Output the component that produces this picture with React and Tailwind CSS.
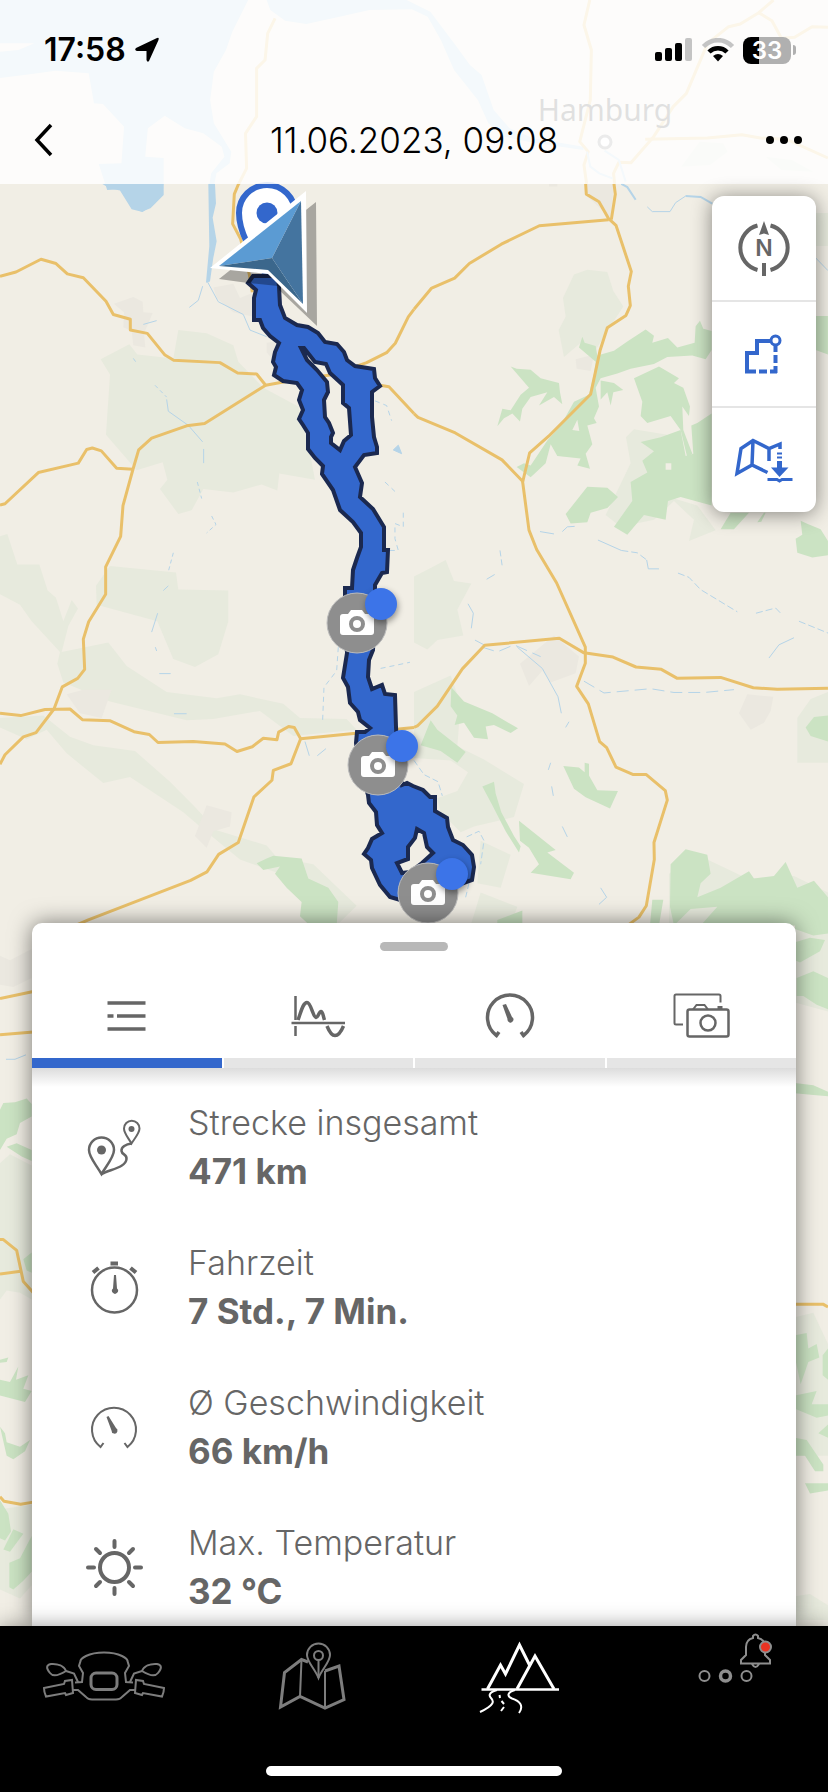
import { useState } from 'react';

const stats = [
  { id: 'distance', label: 'Strecke insgesamt', value: '471 km', Icon: RouteIcon },
  { id: 'time', label: 'Fahrzeit', value: '7 Std., 7 Min.', Icon: StopwatchIcon },
  { id: 'speed', label: 'Ø Geschwindigkeit', value: '66 km/h', Icon: SpeedIcon },
  { id: 'temp', label: 'Max. Temperatur', value: '32 °C', Icon: SunIcon },
];

const tabs = [
  { id: 'list', label: 'Übersicht', Icon: ListTabIcon },
  { id: 'chart', label: 'Verlauf', Icon: ChartTabIcon },
  { id: 'gauge', label: 'Fahrdaten', Icon: GaugeTabIcon },
  { id: 'photos', label: 'Fotos', Icon: PhotosTabIcon },
];

const photoStops = [
  { x: 357, y: 623 },
  { x: 378, y: 765 },
  { x: 428, y: 893 },
];

/* ---------- map ---------- */

// Area around the estuary, behind the header
function NorthTile() {
  return (
    <g transform="scale(0.528 0.3333)">
      <g fill="#b5d4e8">
        <path d="M0 0H470L440 95L428 150L405 215L398 300L405 370L438 455L435 490L410 520L405 560H396L400 520L425 470L420 440L385 400L350 385L312 347L280 385L275 470L310 474V585L285 625L268 635L250 620L228 568L203 570L187 492L230 490L235 380L195 312L178 310L168 220L105 212L60 222L0 234V155L35 150L65 130H0Z" />
        <path d="M505 0H770L815 35L860 130L890 195L912 225L935 330L965 385L1010 415L1105 440V450L1010 428L955 410L925 370L905 300L860 210L835 120L810 50L780 28L700 30L630 55L580 72L540 62L512 30Z" />
      </g>
      <path d="M1325 425L1370 430L1378 455L1345 495L1290 500Z M1450 470L1500 480L1540 515L1480 510Z" fill="#dfe6d5" />
      <g className="fill-none stroke-[#e9c06a] stroke-3" strokeLinejoin="round">
        <path vectorEffect="non-scaling-stroke" d="M521 55L507 100L502 180L486 205V350L465 400L467 505L452 552" />
        <path vectorEffect="non-scaling-stroke" d="M1117 0L1106 75L1120 150L1118 300L1098 425L1114 455L1106 495L1111 552" />
        <path vectorEffect="non-scaling-stroke" d="M1465 0L1437 38L1402 72L1380 80L1340 130L1300 280L1275 320L1238 410L1195 488L1172 487L1162 520L1164 552" />
        <path vectorEffect="non-scaling-stroke" d="M1437 38L1462 62L1480 115L1505 112L1538 80L1568 82M1222 418L1340 414L1405 404L1440 414L1490 418L1568 474" />
      </g>
      <g className="fill-none stroke-[#b5d4e8] stroke-2">
        <path vectorEffect="non-scaling-stroke" d="M1112 455L1118 500L1135 520L1160 535M1145 452L1172 480L1185 545" />
      </g>
    </g>
  );
}

function WestTile() {
  return (
    <g transform="translate(0 180) scale(0.3333 0.4719)">
      <g fill="#e7eadd">
        <path d="M302 380L388 348L412 370L520 378L535 318L620 325L700 350L715 385L790 440L895 480L925 560L945 635L838 622L832 658L785 645L700 662L610 655L575 700L535 708L480 655L502 635L488 598L410 615L318 540L330 412Z" />
        <path d="M0 755L22 750L52 815L118 815L143 870L168 885L190 935L215 890L234 908L205 945L185 1000L325 980L380 1030L500 1085L650 1098L720 1090L850 1110L900 1140L1040 1142L1070 1165L880 1178L780 1125L640 1142L560 1145L330 1105L190 1065L172 1025L180 1000L95 935L60 900L0 878Z" />
        <path d="M288 860L330 818L528 832L535 868L685 870V935L655 1005L585 1032L520 1015L472 935L290 900Z" />
        <path d="M0 1140L130 1135L210 1180L280 1198L405 1210L510 1275L580 1325L650 1378L800 1410L830 1435L940 1450L1070 1538L1010 1580H960L880 1480L720 1440L600 1370L550 1340L390 1265L310 1278L200 1215L140 1165L80 1185L0 1160Z" />
      </g>
      <g fill="#ebe8e0">
        <path d="M342 262L400 248L428 258L430 280L458 282L432 325L436 355L400 350L395 320L370 312L372 280Z" />
        <path d="M640 228L700 220L720 250L755 240L760 290L700 280L650 250Z M800 345L850 340L840 400L800 365Z" />
        <path d="M200 1090L250 1080L335 1080L320 1110L305 1140L240 1130Z" />
        <path d="M585 1390L620 1325L695 1340L690 1370L640 1380L620 1415Z" />
      </g>
      <g fill="#cbe3c3">
        <path d="M770 1448L800 1438L820 1432L905 1438L925 1480L985 1500L1015 1530L1010 1580H930L900 1560L905 1530L860 1500L825 1470L840 1455L790 1462Z" />
      </g>
      <path d="M306 8H490L488 25L465 50L428 68L395 62L360 22L330 18Z M625 8H645L648 50L638 80L650 130L640 165L630 215L618 218L628 140Z" fill="#b5d4e8" />
      <g className="fill-none stroke-[#b5d4e8] stroke-1">
        <path vectorEffect="non-scaling-stroke" d="M622 215L655 258L730 285L750 318L800 332" />
        <path vectorEffect="non-scaling-stroke" d="M608 225L595 255L568 270M430 306L470 298M500 465L505 490L565 520L608 555M611 570V600" />
        <path vectorEffect="non-scaling-stroke" strokeDasharray="4 3" d="M465 435L500 460M592 640L605 675M635 712L648 730L620 748M520 790L505 830M400 378L410 388" />
        <path vectorEffect="non-scaling-stroke" d="M490 870L505 860M473 918L455 958M478 1046H512M522 1131H560M915 1190L928 1220M952 1220L978 1205M466 990L470 998" />
        <path vectorEffect="non-scaling-stroke" strokeDasharray="5 4" d="M1015 990L1010 1040L972 1075L968 1145M1142 1035L1230 1022M1125 468L1160 478L1175 510M1155 640L1185 660M1210 705V735L1185 728V760L1195 785H1170" />
        <path vectorEffect="non-scaling-stroke" className="fill-[#b5d4e8]" d="M1180 572L1195 562L1205 580Z" />
      </g>
      <g className="fill-none stroke-[#e9c06a] stroke-3" strokeLinejoin="round">
        <path vectorEffect="non-scaling-stroke" d="M0 204L48 195L123 168L168 177L202 199L250 207L318 257L340 285L391 295V318L442 325L495 371L521 382L660 387L713 409L770 411L797 435L850 428L1000 412L1100 387L1160 366L1186 346L1225 290L1242 274" />
        <path vectorEffect="non-scaling-stroke" d="M797 435L614 516L560 521L455 547L416 572L399 613L369 690L362 755L317 820V878L266 936L250 973L254 1037L233 1056L187 1074L162 1121L108 1171L70 1180L15 1218L0 1238" />
        <path vectorEffect="non-scaling-stroke" d="M0 689L15 686L115 620L235 600L260 571L277 568L304 574L350 611L399 613" />
        <path vectorEffect="non-scaling-stroke" d="M0 1130L62 1135L135 1122L210 1121L248 1144L331 1146L402 1169L448 1175L474 1192L580 1190L675 1195L711 1211L757 1201L790 1183L831 1186L836 1170L866 1158L883 1160L902 1184L1242 1160" />
        <path vectorEffect="non-scaling-stroke" d="M902 1184L873 1237L820 1251L816 1272L762 1307L715 1404L656 1429L621 1466L572 1484L265 1568L225 1580" />
        <path vectorEffect="non-scaling-stroke" d="M716 8L703 30L698 93L722 125L748 200L757 238" />
        <path vectorEffect="non-scaling-stroke" d="M1140 435L1167 438L1242 495" />
      </g>
    </g>
  );
}

function EastTile() {
  return (
    <g transform="translate(414 180) scale(0.3333 0.4719)">
      <g fill="#e7eadd">
        <path d="M447 250L480 200L520 190L580 195L598 235L628 268L580 320L545 360L500 345L450 375L434 318L455 290Z" />
        <path d="M0 840L50 822L95 805L120 850L172 855L130 910L148 965L70 975L40 995L0 980Z" />
        <path d="M0 1085L110 1050L140 1110L130 1200L210 1228L330 1280L300 1350L180 1370L140 1382L80 1340L70 1310L130 1295L162 1255L110 1230L0 1225Z M200 1400L290 1430L260 1500L190 1490Z M170 1580L200 1510L310 1540L290 1580Z" />
        <path d="M1242 1085L1190 1100L1150 1140V1235H1242Z M765 1470L850 1430L1000 1480L1140 1475L1242 1510V1580H765Z M1205 70H1242V140H1205Z" />
        <path d="M575 710L650 600L636 545L660 528L760 540L740 650L780 675L850 690L905 742L825 765L840 720L780 680L720 720L620 735Z" />
      </g>
      <g fill="#ebe8e0">
        <path d="M515 8H600L590 80L520 35Z M318 1025L420 965L495 1010L485 1045L410 1065L385 1040L345 1072Z M975 1130L1000 1090L1078 1095L1070 1125L1050 1150L1010 1165Z" />
        <path d="M405 8H430V14H405Z M485 380L540 370L530 405L488 400Z" />
      </g>
      <g fill="#cbe3c3">
        <path d="M495 355L505 332L512 345L545 352L550 372L600 362L640 342L695 317L720 330L715 345L762 335L790 355L842 345L845 310L858 298L868 315L893 320V360L875 380L835 372L760 375L720 390L650 400L610 410L560 420L545 440L555 480L540 505L548 515L520 520L535 560L515 580L528 612L490 605L500 590L430 585L410 560L395 600L350 630L308 608L330 600L350 605L400 552L440 520L480 470L525 455L540 410L545 385Z" />
        <path d="M290 395L308 400L350 402L380 420L435 430L438 450L445 475L420 460L375 478L400 450L350 460L325 485L318 512L295 495L270 505L250 522L265 485L290 488L320 455L345 440Z" />
        <path d="M560 425L600 430L628 445L598 450L590 478L580 450L560 465Z" />
        <path d="M660 420L735 395L795 420L780 430L808 440L828 480L825 500L805 480L808 530L835 580L820 588L800 530L770 500L700 515L680 500L685 470L670 440Z" />
        <path d="M893 495L850 515L832 520L838 580L815 585L800 530L740 545L680 555L720 575L685 595L700 620L650 640L655 680L600 735L640 752L690 710L755 720L762 680L800 672L893 690Z" />
        <path d="M455 708L520 650L580 652L612 672L580 695L530 705L520 725L470 728Z" />
        <path d="M920 740L950 705H1005L960 740Z M1030 725L1050 705H1055L1042 724Z" />
        <path d="M1145 760L1165 752L1160 722L1185 730L1220 740L1242 765V795L1195 800L1150 790Z M1205 288H1242V370L1205 360Z" />
        <path d="M112 1075L150 1105L235 1130L312 1162L290 1172L240 1155L215 1158L222 1185L180 1182L150 1150L122 1155L130 1135L110 1115Z" />
        <path d="M20 1198L50 1145L70 1165L155 1212L130 1235L80 1210Z" />
        <path d="M448 1242L495 1245L512 1255V1235L525 1237V1262L550 1293L612 1295L588 1332L515 1308L480 1290Z" />
        <path d="M205 1285L240 1275L245 1300L262 1340L300 1390L320 1412L315 1425L275 1380L235 1325Z" />
        <path d="M315 1358L425 1420L400 1425L480 1468L470 1482L350 1468L375 1450L345 1415L318 1400Z" />
        <path d="M768 1540L770 1450L815 1418L880 1430L890 1470L860 1490L850 1520L920 1500L1005 1465L1020 1480L1080 1475L1115 1445L1150 1500L1200 1485L1242 1520V1580H860L910 1540L830 1545L780 1580Z M715 1525H748L735 1580H708Z M250 1568L325 1548V1580H250Z" />
        <path d="M1175 1160L1200 1138L1242 1135V1190L1190 1178Z" />
      </g>
      <path d="M755 600H772V614H755Z M475 530L490 508L496 532Z" fill="#f1eee5" />
      <g className="fill-none stroke-[#b5d4e8] stroke-1">
        <path vectorEffect="non-scaling-stroke" className="stroke-2" d="M622 8L640 15L665 42M815 34L860 36L895 50" />
        <path vectorEffect="non-scaling-stroke" d="M700 57L715 67H768L785 48L815 34M1205 165L1242 192" />
        <path vectorEffect="non-scaling-stroke" d="M378 745L420 750M445 745L460 735L482 734M552 763L622 785M698 805L703 824H735M218 846L242 836M162 898L178 918L172 950M183 975L210 985" />
        <path vectorEffect="non-scaling-stroke" strokeDasharray="7 3" d="M622 785L670 790L698 805M792 833L825 842L860 868L970 915M1026 918L1085 907L1100 918M1155 935L1242 960" />
        <path vectorEffect="non-scaling-stroke" strokeDasharray="12 6" d="M205 990L250 1000L300 985L380 1010M510 1062L570 1087L710 1078L780 1086H870L960 1080" />
        <path vectorEffect="non-scaling-stroke" d="M1065 1013L1095 985L1140 970M310 990L385 1035L432 1095L442 1130M455 1160L465 1148M410 1235L403 1250M413 1285L418 1305M445 1370L460 1392M560 1500L578 1520L555 1535" />
        <path vectorEffect="non-scaling-stroke" strokeDasharray="6 3" d="M0 1230L30 1260L72 1275L85 1305M158 1392L195 1380L210 1400L200 1450M165 1490L155 1520M258 785L265 820" />
      </g>
      <g className="fill-none stroke-[#e9c06a] stroke-3" strokeLinejoin="round">
        <path vectorEffect="non-scaling-stroke" d="M0 274L53 229L122 208L166 177L262 136L376 97L584 84" />
        <path vectorEffect="non-scaling-stroke" d="M515 8L517 30L555 46L584 82L606 96L652 194L643 225L649 266L636 287L580 313L558 362L530 454L404 543L347 578L326 640L345 742L368 783L428 854L514 990V1024L488 1073L523 1110L557 1190L578 1203L606 1244L658 1260H697L754 1294L760 1314L720 1404L721 1440L697 1538L675 1562L640 1580" />
        <path vectorEffect="non-scaling-stroke" d="M600 8L604 30L592 84" />
        <path vectorEffect="non-scaling-stroke" d="M0 495L12 503L124 536L264 593L328 640" />
        <path vectorEffect="non-scaling-stroke" d="M0 1160L10 1157L70 1115L145 1036L212 986L436 971L510 1002L597 1011L666 1032L742 1037L790 1056L920 1054L1018 1076L1090 1079L1242 1077" />
      </g>
    </g>
  );
}

// Narrow strips left and right of the sheet
function SouthTiles() {
  return (
    <>
      <g transform="translate(0 920) scale(0.3333 0.4464)">
        <path d="M0 545L30 525L95 550V850L60 835L20 830L0 850Z M0 1320L95 1310V1490L60 1520L0 1500Z" fill="#e7eadd" />
        <path d="M0 80L30 90L95 65V130L40 150L0 145Z" fill="#ebe8e0" />
        <path d="M0 425L10 410L45 408L80 400L95 412V440L60 455L50 480L20 490L0 515Z M20 508L50 500L95 515V540L65 530Z M70 760L95 745V790L80 785Z M0 985L25 980L20 990L0 992Z M0 1030L30 1035L55 1000L48 1030L85 1020L70 1050L95 1055L75 1080L0 1065Z M0 1135L15 1150L20 1170L60 1180L90 1165L75 1190L40 1208L20 1200Z M0 1300L25 1330L33 1370L15 1390L0 1385Z M10 1410L40 1365L70 1375L30 1415Z M28 1440L60 1430L95 1380V1460L70 1480L40 1500L28 1495Z" fill="#cbe3c3" />
        <g className="fill-none stroke-[#e9c06a] stroke-3" strokeLinejoin="round">
          <path vectorEffect="non-scaling-stroke" d="M0 176L100 160M0 257L100 251" />
          <path vectorEffect="non-scaling-stroke" d="M0 716H10L50 740L70 810L100 835M0 793L62 787M0 1292L12 1302L62 1309L100 1304" />
        </g>
        <path vectorEffect="non-scaling-stroke" className="fill-none stroke-[#b5d4e8] stroke-1" d="M18 312H45L78 302" />
      </g>
      <g transform="translate(780 920) scale(0.3333 0.4464)">
        <path d="M45 0H144V205L45 185Z M45 890L100 880L144 950V1200L45 1200Z M45 1515L90 1510L144 1535V1568H45Z" fill="#e7eadd" />
        <path d="M45 0H144V30L100 35L45 20Z M45 50L90 40L135 45L120 70L60 95L45 90Z M50 130L100 115L144 130V200L110 190L70 170H50Z M45 365L100 370L144 385V395L100 392L45 388Z M45 930L80 925L85 960L110 950L118 980L85 990L62 1040L45 980Z M45 1065L110 1055L95 1085L144 1085V1110L110 1115L45 1095Z M115 1150L144 1130V1160Z M45 1160L80 1165L130 1220V1235H105L75 1200H45Z M75 1262H144V1278L90 1285Z M128 975L144 960V1030L128 1020Z" fill="#cbe3c3" />
        <path vectorEffect="non-scaling-stroke" className="fill-none stroke-[#e9c06a] stroke-3" d="M45 861H130L144 867" />
      </g>
    </>
  );
}

function Track() {
  return (
    <path
      fillRule="evenodd"
      className="fill-[#3367cc] stroke-[#1b2950] stroke-4"
      d="M253 276L248 283L256 290L254 298V320H260L263 328L270 336L279 343L275 352L273 362L276 367L274 375L283 381L297 383L302 390L299 400L303 410L299 419L303 425L308 433V449L315 458L323 466L322 474L333 490L340 510L353 522L361 533V547L357 558L353 570L352 588H345V610L347 653L343 678L348 687L350 703L358 712L360 720L370 728L365 732H357L356 743L360 770L368 795L369 803L376 812L377 825L382 833L372 839L368 848L364 854L371 860L372 868L380 885L390 897L400 900L430 895L472 880L474 867L472 855L463 845L453 840L448 827L447 818L435 811V797H430L423 790L413 786L407 783L402 785L398 760L396 727L395 695L385 694L382 685L372 689L368 677L369 660L373 650L375 600V585L382 573L387 572L388 550H384V527L373 509L360 497L362 483L355 467L364 455L377 453V447L374 437L372 417V392L380 386L375 378L374 369L355 366L347 360L344 352L337 344L325 342L318 333L308 327L297 325L285 318L280 305L279 287L278 276Z
        M301 348L304 348L315 362L326 364L330 373L343 385V403L349 408L351 435L344 441L340 450L331 443V437L333 433L329 423L325 417L324 400L328 392L327 382L317 370L307 360Z
        M417 829L424 833L427 847L433 853L422 863L410 872L402 873L397 863L408 859V847L415 838Z"
    />
  );
}

function PhotoStop({ x, y }) {
  return (
    <g transform={`translate(${x} ${y})`}>
      <circle r="30" fill="#8e8e8e" stroke="#bcbcbc" strokeWidth="1" />
      <path d="M-14 -9H-9L-6 -13H5L8 -9H14Q17 -9 17 -6V9Q17 12 14 12H-14Q-17 12 -17 9V-6Q-17 -9 -14 -9Z" fill="#fff" />
      <circle cy="1" r="6" fill="#fff" stroke="#8e8e8e" strokeWidth="4" />
      <circle cx="24" cy="-19" r="16" fill="#3c74e8" className="drop-shadow-[1px_3px_3px_rgba(0,0,0,0.4)]" />
    </g>
  );
}

function RouteMap() {
  return (
    <svg
      viewBox="0 0 828 1792"
      preserveAspectRatio="xMidYMin slice"
      className="absolute inset-0 w-full h-full"
      role="img"
      aria-label="Karte"
    >
      <NorthTile />
      <WestTile />
      <EastTile />
      <SouthTiles />
      <text x="605" y="121" textAnchor="middle" className="fill-[#333] text-[30px] font-['Noto_Sans',sans-serif]">
        Hamburg
      </text>
      <circle cx="605" cy="142" r="6" fill="#fff" stroke="#777" strokeWidth="3" />
      {/* start pin */}
      <path d="M267 276C250 250 239 232 239 213A28 28 0 0 1 295 213C295 232 284 250 267 276Z" fill="#fff" stroke="#3367cc" strokeWidth="6" />
      <circle cx="267" cy="213" r="10.5" fill="#3367cc" />
      <Track />
      {/* position arrow */}
      <path d="M219 279L316 202L317 326L279 290L278 286L248 283Z" fill="#000" fillOpacity="0.3" />
      <path d="M210 268L306 191L307 313L268 274Z" fill="#fff" />
      <path d="M219 266L301 201L272 258Z" fill="#5b9bd3" />
      <path d="M301 201L303 304L272 258Z" fill="#44749f" />
      <path d="M219 266L272 258L303 304L268 270Z" fill="#3b678c" />
      {photoStops.map((stop) => (
        <PhotoStop key={stop.y} x={stop.x} y={stop.y} />
      ))}
    </svg>
  );
}

/* ---------- status bar ---------- */

function StatusBar() {
  return (
    <div className="flex h-[98px] items-center justify-between pt-0.5 pl-11 pr-8">
      <div className="flex items-center gap-2">
        <span className="text-[32px] font-semibold">17:58</span>
        <svg width="26" height="26" viewBox="0 0 26 26">
          <path d="M23 1Q25.5 0 24.5 3L15 24Q13.5 26 12.5 23V14H3Q0 13 2 11Z" />
        </svg>
      </div>
      <div className="flex items-center gap-2">
        <svg width="38" height="24" viewBox="0 0 38 24">
          <rect x="0" y="14" width="7" height="9" rx="2" />
          <rect x="10" y="10" width="7" height="13" rx="2" />
          <rect x="20" y="5" width="7" height="18" rx="2" />
          <rect x="30" y="0" width="7" height="23" rx="2" fill="#c4c4c4" />
        </svg>
        <svg width="34" height="24" viewBox="0 0 34 24" fill="none">
          <path d="M2.5 8.5C10.5 0 23.5 0 31.5 8.5" stroke="#c4c4c4" strokeWidth="4.5" />
          <path d="M8 14C13 9 21 9 26 14" stroke="#000" strokeWidth="4.5" />
          <path d="M12 18Q17 14 22 18L17 23.5Z" fill="#000" />
        </svg>
        <div className="flex items-center gap-0.5">
          <div className="h-[27px] w-12 rounded-lg bg-[linear-gradient(90deg,#000_34%,#b0b0b0_34%)] text-center text-2xl leading-[27px] font-semibold text-white">
            33
          </div>
          <div className="h-2.5 w-[3px] rounded-r-full bg-[#b0b0b0]" />
        </div>
      </div>
    </div>
  );
}

/* ---------- icons ---------- */

function CompassIcon() {
  return (
    <svg viewBox="0 0 104 104" className="size-[104px]" fill="none" stroke="#666" strokeWidth="4">
      <path d="M45.5 29.5A23 23 0 0 0 45.5 74M58.5 29.5A23 23 0 0 1 58.5 74" />
      <path d="M52 67V80" />
      <path d="M52 25L57 39L52 37.5L47 39Z" fill="#666" stroke="none" />
      <text x="52" y="60" textAnchor="middle" fill="#666" stroke="none" className="text-[23px] font-semibold">N</text>
    </svg>
  );
}

function TourIcon() {
  return (
    <svg viewBox="0 0 104 104" className="size-[104px]" fill="none" stroke="#3367cc" strokeWidth="4">
      <path d="M59 39H45V51H35V69.5H44M47 69.5H55M58 69.5H65M63.5 71V64M63.5 61V53M63.5 50V43" />
      <circle cx="63.5" cy="38.5" r="4.5" strokeWidth="3" fill="#fff" />
    </svg>
  );
}

function MapDownloadIcon() {
  return (
    <svg viewBox="0 0 104 104" className="size-[104px]" fill="none" stroke="#3367cc" strokeWidth="3.5">
      <path d="M55.5 64.5L40 57L25 65.5L29 40.5L41 32.5L57 40.5L68 36V41M41 32.5L40 57M57 40.5V53" />
      <path d="M65 45.5H70M65 49.5H70" strokeWidth="2" />
      <path d="M67.5 53V61" strokeWidth="5" />
      <path d="M59 59.5H76.5L67.5 69Z" fill="#3367cc" stroke="none" />
      <path d="M55.5 71.5H65L67.5 73L70 71.5H80.5" strokeWidth="3" />
    </svg>
  );
}

function ListTabIcon() {
  return (
    <svg viewBox="0 0 80 60" className="h-[60px] w-20" stroke="#666" strokeWidth="3.5">
      <path d="M20.5 17H58.5M20.5 30H26.5M30 30H58.5M20.5 43H58.5" />
    </svg>
  );
}

function ChartTabIcon() {
  return (
    <svg viewBox="0 0 80 60" className="h-[60px] w-20" fill="none" stroke="#666" strokeWidth="3.5">
      <path d="M17.5 10V34M17.5 40V50M13.5 37H67" strokeWidth="2.5" />
      <path d="M20 34C23 26 25 16.5 29 16.5S35 31 38 31.5C40 32 41 25.5 43 25.5S45 30 46.5 34M49 40C51 45 54 49.5 57 49.5S63 46 65.5 40" />
    </svg>
  );
}

function GaugeTabIcon() {
  return (
    <svg viewBox="0 0 80 60" className="h-[60px] w-20" fill="none" stroke="#666" strokeWidth="3.5">
      <path d="M29 46L26.5 49.5A22.5 22.5 0 1 1 53.5 49.5L51 46" />
      <path d="M32.5 19L36 18L42 31A3 3 0 1 1 37.5 33Z" fill="#666" stroke="none" />
    </svg>
  );
}

function PhotosTabIcon() {
  return (
    <svg viewBox="0 0 80 60" className="h-[60px] w-20" fill="none" stroke="#666" strokeWidth="2">
      <path d="M22 38.5H15Q13.5 38.5 13.5 37V10Q13.5 8.5 15 8.5H58Q59.5 8.5 59.5 10V16.5" />
      <rect x="26.5" y="23.5" width="41" height="27" rx="2" strokeWidth="2.5" />
      <path d="M32 23.5L35.5 19H43.5L47 23.5" />
      <path d="M56.5 21.5H61.5" strokeWidth="3" />
      <circle cx="47" cy="37" r="7.5" strokeWidth="2.5" />
    </svg>
  );
}

function RouteIcon() {
  return (
    <svg viewBox="0 0 64 64" className="size-16" fill="none" stroke="#666" strokeWidth="2.5">
      <path d="M19.5 59C13 48 7 42 7 35A12.5 12.5 0 0 1 32 35C32 42 25 50 19.5 59Z" />
      <circle cx="19.5" cy="35" r="4.5" fill="#666" stroke="none" />
      <path d="M49.5 28.5C45 21 42 18 42 13.5A7.7 7.7 0 0 1 57.5 13.5C57.5 18 53 23 49.5 28.5Z" strokeWidth="2" />
      <circle cx="49.5" cy="14" r="3" fill="#666" stroke="none" />
      <path d="M49.5 28.5C44 29 39 32 39.5 36S45 39 44.5 44C44 52 30 54 19.5 59" />
    </svg>
  );
}

function StopwatchIcon() {
  return (
    <svg viewBox="0 0 64 64" className="size-16" fill="none" stroke="#666" strokeWidth="2.5">
      <circle cx="32.5" cy="35" r="22.5" />
      <path d="M28.5 8.5H36M11 17.5L16.5 13M54 17.5L48.5 13" strokeWidth="4" />
      <path d="M32 20H34L35 33.5A3 3 0 1 1 31 33.5Z" fill="#666" stroke="none" />
    </svg>
  );
}

function SpeedIcon() {
  return (
    <svg viewBox="0 0 64 64" className="size-16" fill="none" stroke="#666" strokeWidth="2">
      <path d="M21.5 48L18.5 52A22 22 0 1 1 45.5 52L42.5 48" />
      <path d="M24.5 22L26.5 21L34 33A3 3 0 1 1 29.5 35.5Z" fill="#666" stroke="none" />
    </svg>
  );
}

function SunIcon() {
  return (
    <svg viewBox="0 0 64 64" className="size-16" fill="none" stroke="#666" strokeWidth="4" strokeLinecap="round">
      <circle cx="32.5" cy="32.5" r="14.5" />
      <path d="M32.5 6V12M32.5 53V59M6 32.5H12M53 32.5H59M14 14L18 18M47 47L51 51M51 14L47 18M18 47L14 51" />
    </svg>
  );
}

function BikeIcon() {
  const half = (
    <>
      <path d="M70 22.5C62 22.5 56 24 52 26C48 28 46.5 29 46.5 31L45 36L49 43L48 52L41 52.5M44 52L40 43.5L32 41M39 60H44L52 67Q54 69.5 58 69.5H70" />
      <path d="M32 41C30 36 24 33.500 17 34C12 35 12 38 16 43C19 47 24 46 32 41Z" />
      <path d="M10 58L30 54L31 51L38 50L39 63L32 65L31 63L12 66.5Q10 62 10 58Z" />
    </>
  );
  return (
    <svg viewBox="0 0 140 90" className="h-[90px] w-[140px]" fill="none" stroke="#7d7d7d" strokeWidth="2">
      {half}
      <g transform="translate(140 0) scale(-1 1)">{half}</g>
      <rect x="57" y="43" width="26" height="16.5" rx="5" strokeWidth="3" />
    </svg>
  );
}

function MapNavIcon() {
  return (
    <svg viewBox="0 0 140 90" className="h-[90px] w-[140px]" fill="none" stroke="#7d7d7d" strokeWidth="3">
      <path d="M67 32L60.5 29.5L43.5 42.5L39.5 77L59 66.5L84 78L103 69.5L98 36L84 41" />
      <path d="M60.5 29.5L59 66.5M84 41V78" strokeWidth="2" />
      <path d="M77.5 48C74 39 66 32 66 25A11.5 11.5 0 0 1 89 25C89 32 81 39 77.5 48Z" strokeWidth="2" />
      <circle cx="77.5" cy="25.5" r="4.5" strokeWidth="2" />
      <path d="M77.5 30V48" strokeWidth="2" />
    </svg>
  );
}

function TripsNavIcon() {
  return (
    <svg viewBox="0 0 140 90" className="h-[90px] w-[140px]" fill="none" stroke="#fff" strokeWidth="2.5">
      <path d="M33.5 59.5H111" />
      <path d="M39.5 59L52.5 35L57.5 44L71.5 15L81.5 35M69 59L87 26L106 59" strokeWidth="3" />
      <path d="M49 60C42 62 40 65 43 68S47 75 32 82M67 60C60 62 58 66 64 68.5C72 71 76 76 71 83M51.5 65L52 68M53.5 71L56 74M56 77L53 81" strokeWidth="2" />
    </svg>
  );
}

function MoreNavIcon() {
  return (
    <svg viewBox="0 0 140 90" className="h-[90px] w-[140px]" fill="none" stroke="#8e8e8e" strokeWidth="2">
      <circle cx="49.5" cy="46" r="5" />
      <circle cx="70.5" cy="46" r="5" strokeWidth="3.5" />
      <circle cx="91.5" cy="46" r="5" />
      <path d="M86 33.5V30L91 25V17C91 12 94 9 98 8V6Q100.5 3 103 6V8C107 9 110 12 110 17V25L115 30V33.5ZM97 34Q100.5 40 104 34" />
      <circle cx="110.5" cy="17" r="5.5" fill="#ea3323" />
    </svg>
  );
}

/* ---------- sheet ---------- */

function TourSheet() {
  const [activeTab, setActiveTab] = useState('list');

  return (
    <section className="mx-8 mt-auto rounded-t-[10px] bg-white shadow-[0_0_22px_rgba(0,0,0,0.5)]">
      <div className="flex h-[53px] justify-center pt-[19px]">
        <div className="h-[9px] w-[68px] rounded-full bg-[#b8b8b8]" />
      </div>
      <div role="tablist" className="grid grid-cols-4 gap-0.5">
        {tabs.map(({ id, label, Icon }) => (
          <button
            key={id}
            role="tab"
            aria-label={label}
            aria-selected={activeTab === id}
            onClick={() => setActiveTab(id)}
            className={`flex h-[92px] justify-center border-b-10 pt-2.5 ${
              activeTab === id ? 'border-[#3367cc]' : 'border-[#e5e5e5]'
            }`}
          >
            <Icon />
          </button>
        ))}
      </div>
      <dl className="-mb-3 bg-[linear-gradient(#dcdcdc,#fff_19px)] pt-2.5">
        {stats.map(({ id, label, value, Icon }) => (
          <div key={id} className="grid h-[140px] grid-cols-[64px_1fr] content-center items-center gap-x-[42px] pb-0.5 pl-[50px] leading-[49px] text-[#666]">
            <div className="row-span-2">
              <Icon />
            </div>
            <dt className="text-[34px] font-light">{label}</dt>
            <dd className="text-[35px] font-bold">{value}</dd>
          </div>
        ))}
      </dl>
    </section>
  );
}

export default function App() {
  return (
    <div className="relative flex min-h-screen flex-col overflow-hidden bg-[#f1eee5] font-[Inter,sans-serif] text-black">
      <RouteMap />

      <header className="relative bg-white/85">
        <StatusBar />
        <div className="flex h-[86px] items-center justify-between px-6 pb-0.5">
          <button aria-label="Zurück" className="w-10">
            <svg width="40" height="40" viewBox="0 0 40 40" fill="none" stroke="#000" strokeWidth="3.5">
              <path d="M27 5L13 20L27 35" />
            </svg>
          </button>
          <h1 className="text-[35px] font-light">11.06.2023, 09:08</h1>
          <button aria-label="Mehr" className="w-10">
            <svg width="40" height="40" viewBox="0 0 40 40">
              <circle cx="6" cy="20" r="4" />
              <circle cx="20" cy="20" r="4" />
              <circle cx="34" cy="20" r="4" />
            </svg>
          </button>
        </div>
      </header>

      <main className="relative flex flex-1 flex-col">
        <div className="mt-3 mr-3 flex flex-col divide-y-2 divide-[#e5e5e5] self-end rounded-xl bg-white shadow-[0_2px_20px_rgba(0,0,0,0.45)]">
          <button aria-label="Norden"><CompassIcon /></button>
          <button aria-label="Tour anzeigen"><TourIcon /></button>
          <button aria-label="Karte herunterladen"><MapDownloadIcon /></button>
        </div>
        <TourSheet />
      </main>

      <nav className="relative bg-black shadow-[0_0_20px_rgba(0,0,0,0.4)]">
        <div className="grid h-[140px] grid-cols-4 justify-items-center pt-1">
          <a href="#bike" aria-label="Motorrad"><BikeIcon /></a>
          <a href="#map" aria-label="Karte"><MapNavIcon /></a>
          <a href="#trips" aria-label="Touren"><TripsNavIcon /></a>
          <a href="#more" aria-label="Mehr"><MoreNavIcon /></a>
        </div>
        <div className="mx-auto mb-4 h-2.5 w-[296px] rounded-full bg-white" />
      </nav>
    </div>
  );
}
